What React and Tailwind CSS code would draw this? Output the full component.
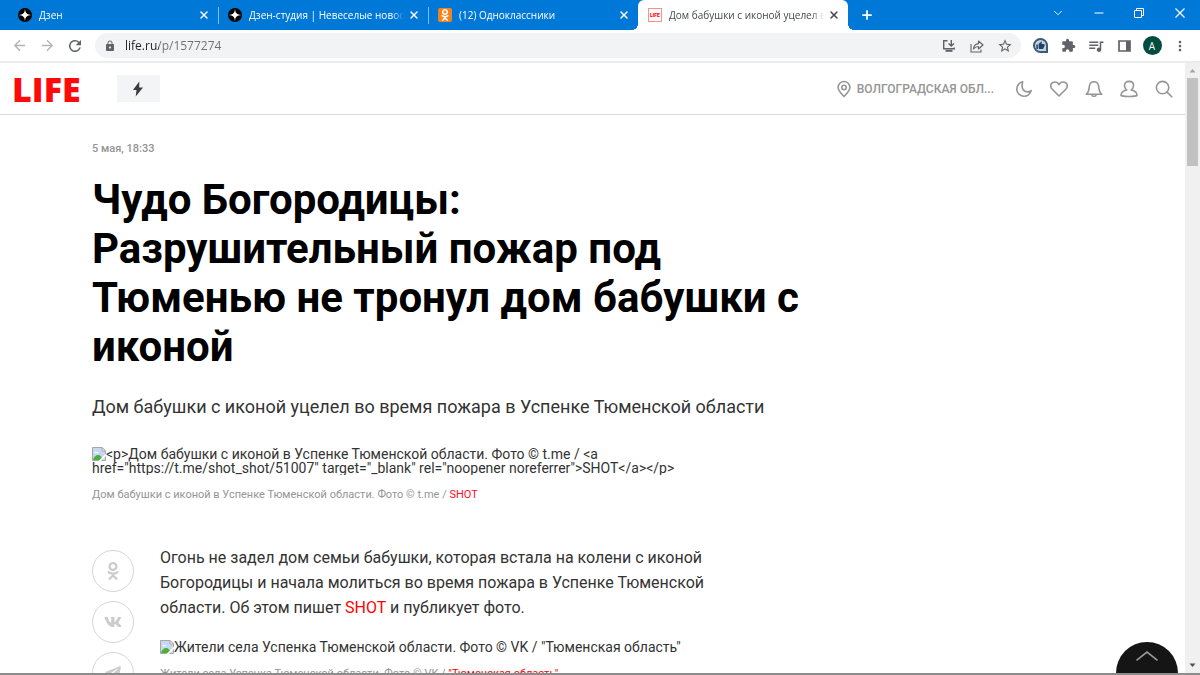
import { ChevronDown, Minus, Plus, X } from 'lucide-react';
import { FaOdnoklassniki, FaTelegramPlane, FaVk } from 'react-icons/fa';
import {
  MdArrowBack, MdArrowForward, MdExtension, MdLock, MdMoreVert,
  MdOutlineQueueMusic, MdRefresh, MdStarBorder, MdThumbUp,
} from 'react-icons/md';

function ZenIcon() {
  return (
    <svg viewBox="0 0 28 28" className="w-[14px] h-[14px] shrink-0">
      <circle cx="14" cy="14" r="14" fill="#000" />
      <path d="M14 1c.4 9 3.600 12.600 13 13-9.400.4-12.600 4-13 13-.4-9-3.600-12.600-13-13 9.400-.4 12.600-4 13-13z" fill="#fff" />
    </svg>
  );
}

function OkIcon() {
  return (
    <span className="w-[14px] h-[14px] shrink-0 rounded-[2px] bg-[#f58220] flex items-center justify-center">
      <FaOdnoklassniki className="w-3 h-3 text-white" />
    </span>
  );
}

function LifeIcon() {
  return (
    <span className="w-[14px] h-[14px] shrink-0 border border-[#ff8f8f] bg-white flex items-center justify-center font-['Roboto',sans-serif] text-[5px] leading-none font-black text-[#f00]">
      LIFE
    </span>
  );
}

const tabs = [
  { title: 'Дзен', icon: <ZenIcon /> },
  { title: 'Дзен-студия | Невеселые новости', icon: <ZenIcon />, divider: true },
  { title: '(12) Одноклассники', icon: <OkIcon />, divider: true },
  { title: 'Дом бабушки с иконой уцелел во время', icon: <LifeIcon />, active: true },
];

function Tab({ title, icon, divider, active }) {
  return (
    <div className={`relative flex items-center w-[210px] min-w-0 h-full pl-[10px] pr-2 ${active ? 'bg-white rounded-t-md text-[#45494d]' : 'text-white'}`}>
      {divider && <span className="absolute left-0 top-[7px] h-[17px] w-px bg-white/50" />}
      {active && (
        <>
          <span className="absolute -left-[6px] bottom-0 w-[6px] h-[6px] bg-[radial-gradient(circle_at_0_0,transparent_6px,white_6px)]" />
          <span className="absolute -right-[6px] bottom-0 w-[6px] h-[6px] bg-[radial-gradient(circle_at_100%_0,transparent_6px,white_6px)]" />
        </>
      )}
      {icon}
      <button className="ml-[7px] flex-1 min-w-0 text-left text-[10px] leading-4 font-medium whitespace-nowrap overflow-hidden [mask-image:linear-gradient(to_right,black_calc(100%-12px),transparent)]">
        {title}
      </button>
      <button aria-label="Закрыть вкладку" className="ml-1 w-3 h-3 flex items-center justify-center">
        <X className="w-3 h-3" strokeWidth={3} />
      </button>
    </div>
  );
}

function WindowButtons() {
  return (
    <div className="ml-auto flex items-center h-[26px] text-white">
      <button aria-label="Поиск вкладок" className="w-10 flex justify-center"><ChevronDown className="w-[14px] h-[14px]" strokeWidth={1.5} /></button>
      <button aria-label="Свернуть" className="w-[41px] flex justify-center"><Minus className="w-[14px] h-[14px]" strokeWidth={1.8} /></button>
      <button aria-label="Восстановить" className="w-10 flex justify-center">
        <svg viewBox="0 0 10 10" className="w-[10px] h-[10px]" fill="none" stroke="currentColor">
          <path d="M.5 2.500h7v7h-7zM2.500 2.500v-2h7v7h-2" />
        </svg>
      </button>
      <button aria-label="Закрыть" className="w-[41px] flex justify-center">
        <svg viewBox="0 0 10 10" className="w-[10px] h-[10px]" fill="none" stroke="currentColor" strokeWidth="1.200">
          <path d="M.5.5l9 9M9.500.5l-9 9" />
        </svg>
      </button>
    </div>
  );
}

function ToolButton({ label, children }) {
  return (
    <button aria-label={label} className="w-7 h-6 shrink-0 flex items-center justify-center text-[#5f6368]">
      {children}
    </button>
  );
}

function Toolbar() {
  return (
    <div className="flex items-center h-[33px] shrink-0 bg-white border-b-2 border-[#ececec] pl-[5px] pr-[6px]">
      <ToolButton label="Назад"><MdArrowBack className="w-[17px] h-[17px] text-[#b4b4b4]" /></ToolButton>
      <ToolButton label="Вперёд"><MdArrowForward className="w-[17px] h-[17px] text-[#b4b4b4]" /></ToolButton>
      <ToolButton label="Обновить"><MdRefresh className="w-[18px] h-[18px]" /></ToolButton>
      <div className="ml-[6px] flex-1 min-w-0 h-[25px] rounded-full bg-[#f1f3f4] flex items-center pl-[9px] pr-[2px]">
        <MdLock className="w-3 h-3 text-[#5f6368] shrink-0" />
        <input
          aria-label="Адрес"
          defaultValue="life.ru/p/1577274"
          className="ml-[9px] flex-1 min-w-0 h-5 outline-none text-[12px] bg-[linear-gradient(90deg,#202124_34px,#6b6f74_34px)] bg-clip-text text-transparent"
        />
        <ToolButton label="Установить">
          <svg viewBox="0 0 14 14" className="w-[14px] h-[14px]" fill="none" stroke="currentColor" strokeWidth="1.400">
            <path d="M5.500 1.700H1.700v8h10.600V8.500M9.300 1v5.500M6.600 4.400l2.700 2.700L12 4.400" />
            <path d="M3.500 11.800h7" strokeWidth="2" />
          </svg>
        </ToolButton>
        <ToolButton label="Поделиться">
          <svg viewBox="0 0 14 14" className="w-[14px] h-[14px]" fill="none" stroke="currentColor" strokeWidth="1.100" strokeLinejoin="round">
            <path d="M1 5v8h10v-2.500M3.500 10c.3-3.500 2-5.200 5-5.400V2l4.500 4-4.500 4V7.500c-2.200 0-3.700.8-5 2.500z" />
          </svg>
        </ToolButton>
        <ToolButton label="В закладки"><MdStarBorder className="w-4 h-4" /></ToolButton>
      </div>
      <div className="flex items-center ml-[5px]">
        <ToolButton label="Лайки">
          <span className="w-[15px] h-[15px] rounded-full rounded-br-none border-2 border-[#3f5a78] bg-[#c3d4e4] flex items-center justify-center">
            <MdThumbUp className="w-[9px] h-[9px] text-[#24425f]" />
          </span>
        </ToolButton>
        <ToolButton label="Расширения"><MdExtension className="w-[15px] h-[15px]" /></ToolButton>
        <ToolButton label="Медиа"><MdOutlineQueueMusic className="w-[18px] h-[18px]" /></ToolButton>
        <ToolButton label="Боковая панель">
          <svg viewBox="0 0 13 12" className="w-[13px] h-3">
            <path d="M1 1h11v10H1z" fill="none" stroke="currentColor" strokeWidth="1.700" />
            <path d="M8 1h4v10H8z" fill="currentColor" />
          </svg>
        </ToolButton>
        <ToolButton label="Профиль">
          <span className="w-[19px] h-[19px] rounded-full bg-[#004d40] text-white text-[10px] leading-none flex items-center justify-center">A</span>
        </ToolButton>
        <ToolButton label="Меню"><MdMoreVert className="w-4 h-4" /></ToolButton>
      </div>
    </div>
  );
}

function LineIcon({ children }) {
  return (
    <svg viewBox="0 0 18 18" className="w-[18px] h-[18px]" fill="none" stroke="currentColor" strokeWidth="1.600" strokeLinejoin="round" strokeLinecap="round">
      {children}
    </svg>
  );
}

function SiteHeader() {
  return (
    <header className="flex items-center h-[52px] border-b border-[#dadada] px-3 text-[#959595]">
      <a href="/" className="font-['Open_Sans',sans-serif] text-[34px] leading-none font-extrabold text-[#ff0a0a]">LIFE</a>
      <button aria-label="Молния" className="ml-9 w-[43px] h-[27px] bg-[#f3f4f6] flex items-center justify-center">
        <svg viewBox="0 0 12 16" className="w-3 h-4" fill="#3c3c3c">
          <path d="M7.300.5L1 9h3.500l-.8 6.500L11 6.600H7.200z" />
        </svg>
      </button>
      <button className="ml-auto flex items-center gap-1 text-[12px] leading-4 font-medium">
        <LineIcon>
          <path d="M9 16.500C5.500 12.800 3.100 10.400 3.100 7.400a5.900 5.900 0 0 1 11.800 0c0 3-2.400 5.400-5.900 9.100z" />
          <circle cx="9" cy="7.500" r="2.200" />
        </LineIcon>
        ВОЛГОГРАДСКАЯ ОБЛ...
      </button>
      <nav className="flex items-center ml-[21px] gap-[17px]">
        <button aria-label="Тёмная тема">
          <LineIcon><path d="M7.700 1.800a7.300 7.300 0 1 0 8.500 8.800c-1.100.9-2.300 1.300-3.600 1.300A5.500 5.500 0 0 1 7.100 6.500c0-1.800.1-3.200.6-4.700z" /></LineIcon>
        </button>
        <button aria-label="Избранное">
          <LineIcon><path d="M9 16L2.200 9.200C-.8 6 1.300 2 4.900 2 6.800 2 8.200 3 9 4.700 9.800 3 11.200 2 13.100 2c3.600 0 5.700 4 2.700 7.200z" /></LineIcon>
        </button>
        <button aria-label="Уведомления">
          <LineIcon><path d="M1.200 14.300c2.600-2 2.700-4.400 3.100-7.700C4.600 3.600 6.500 1.700 9 1.700s4.400 1.900 4.700 4.900c.4 3.300.5 5.700 3.100 7.700zM7 15.400c.4 1.200 3.600 1.200 4 0" /></LineIcon>
        </button>
        <button aria-label="Профиль">
          <LineIcon><path d="M6.700 10C4.900 8.700 4.500 7 4.500 5.300 4.500 3 6.300 1.400 9 1.400s4.500 1.600 4.500 3.900c0 1.700-.4 3.400-2.200 4.700 3.300.6 5.700 1.900 5.700 5.600-4 .9-12 .9-16 0C1 11.900 3.400 10.600 6.700 10z" /></LineIcon>
        </button>
        <button aria-label="Поиск">
          <LineIcon><circle cx="7.600" cy="7.600" r="6.200" /><path d="M12.100 12.100l4.700 4.700" /></LineIcon>
        </button>
      </nav>
    </header>
  );
}

function BrokenImage() {
  return (
    <svg viewBox="0 0 14 14" className="inline-block align-top w-[14px] h-[14px]">
      <path d="M.5.500h9.500l3.500 3.500v9.500H.5z" fill="#c6d8f4" stroke="#a7a7a7" />
      <path d="M10 .5V4h3.500z" fill="#fff" stroke="#a7a7a7" />
      <path d="M2.500 6.200c0-1.500 1.500-2 2.200-1 1-.6 2 .2 1.800 1z" fill="#fff" />
      <path d="M1 13c.5-3 3-5 5-5 2.500 0 4 2 4.500 5z" fill="#4caf38" />
      <path d="M14 6.500L6.500 14H9l5-5z" fill="#fff" />
    </svg>
  );
}

const shareLinks = [
  { label: 'Одноклассники', Icon: FaOdnoklassniki },
  { label: 'ВКонтакте', Icon: FaVk },
  { label: 'Telegram', Icon: FaTelegramPlane },
];

function Article() {
  return (
    <article className="pl-[92px] pt-[26px] text-[#333]">
      <time className="block text-[11px] leading-4 font-medium text-[#959595]">5 мая, 18:33</time>
      <h1 className="mt-[18px] max-w-[720px] text-[42px] leading-[49px] font-bold text-black">
        Чудо Богородицы: Разрушительный пожар под Тюменью не тронул дом бабушки с иконой
      </h1>
      <p className="mt-6 text-[18px] leading-6">Дом бабушки с иконой уцелел во время пожара в Успенке Тюменской области</p>
      <figure className="mt-7 max-w-[610px]">
        <div className="text-[14px] leading-[14px] overflow-hidden">
          <BrokenImage />
          {'<p>Дом бабушки с иконой в Успенке Тюменской области. Фото © t.me / <a href="https://t.me/shot_shot/51007" target="_blank" rel="noopener noreferrer">SHOT</a></p>'}
        </div>
        <figcaption className="mt-3 text-[11px] leading-4 text-[#959595]">
          Дом бабушки с иконой в Успенке Тюменской области. Фото © t.me / <a href="#shot" className="text-[#ff0a2a]">SHOT</a>
        </figcaption>
      </figure>
      <div className="mt-[42px] flex items-start gap-[26px]">
        <div className="flex flex-col gap-[9px] pt-[5px]">
          {shareLinks.map(({ label, Icon }) => (
            <button key={label} aria-label={label} className="w-[42px] h-[42px] rounded-full border border-[#d6d6d6] flex items-center justify-center text-[#ccc]">
              <Icon className="w-[18px] h-[18px]" />
            </button>
          ))}
        </div>
        <div className="max-w-[560px]">
          <p className="text-[16px] leading-[25px]">
            Огонь не задел дом семьи бабушки, которая встала на колени с иконой Богородицы и начала молиться во время пожара в Успенке Тюменской области. Об этом пишет <a href="#shot" className="text-[#f00]">SHOT</a> и публикует фото.
          </p>
          <figure className="mt-5">
            <div className="text-[14px] leading-[14px]">
              <BrokenImage />
              Жители села Успенка Тюменской области. Фото © VK / "Тюменская область"
            </div>
            <figcaption className="mt-3 text-[11px] leading-4 text-[#959595]">
              Жители села Успенка Тюменской области. Фото © VK / <a href="#vk" className="text-[#f00]">"Тюменская область"</a>
            </figcaption>
          </figure>
        </div>
      </div>
    </article>
  );
}

function Scrollbar() {
  return (
    <div className="w-[15px] shrink-0 bg-[#f0f0f0] flex flex-col items-center">
      <svg viewBox="0 0 15 15" className="w-[15px] h-[15px] shrink-0"><path d="M4.500 9.500h6l-3-3.500z" fill="#a3a3a3" /></svg>
      <div className="w-[11px] h-[88px] bg-[#c1c1c1]" />
      <svg viewBox="0 0 15 15" className="w-[15px] h-[15px] shrink-0 mt-auto"><path d="M4.500 5.500h6l-3 3.500z" fill="#505050" /></svg>
    </div>
  );
}

export default function App() {
  return (
    <div className="h-screen flex flex-col overflow-hidden bg-white border-b-2 border-[#8c8c8c] font-['Open_Sans','Noto_Sans',sans-serif]">
      <div className="flex h-[30px] shrink-0 bg-[#0078d7] pl-2">
        {tabs.map((tab) => <Tab key={tab.title} {...tab} />)}
        <button aria-label="Новая вкладка" className="ml-3 text-white"><Plus className="w-[14px] h-[14px]" strokeWidth={3} /></button>
        <WindowButtons />
      </div>
      <Toolbar />
      <div className="flex flex-1 min-h-0">
        <div className="relative flex-1 min-w-0 overflow-hidden font-['Roboto',sans-serif]">
          <SiteHeader />
          <Article />
          <button aria-label="Наверх" className="absolute right-[7px] -bottom-[31px] w-[62px] h-[62px] rounded-full bg-[#151515] flex justify-center pt-[9px]">
            <svg viewBox="0 0 22 10" className="w-[22px] h-[10px]" fill="none" stroke="#999" strokeWidth="1.600">
              <path d="M.5 9.300L11 1l10.500 8.300" />
            </svg>
          </button>
        </div>
        <Scrollbar />
      </div>
    </div>
  );
}
